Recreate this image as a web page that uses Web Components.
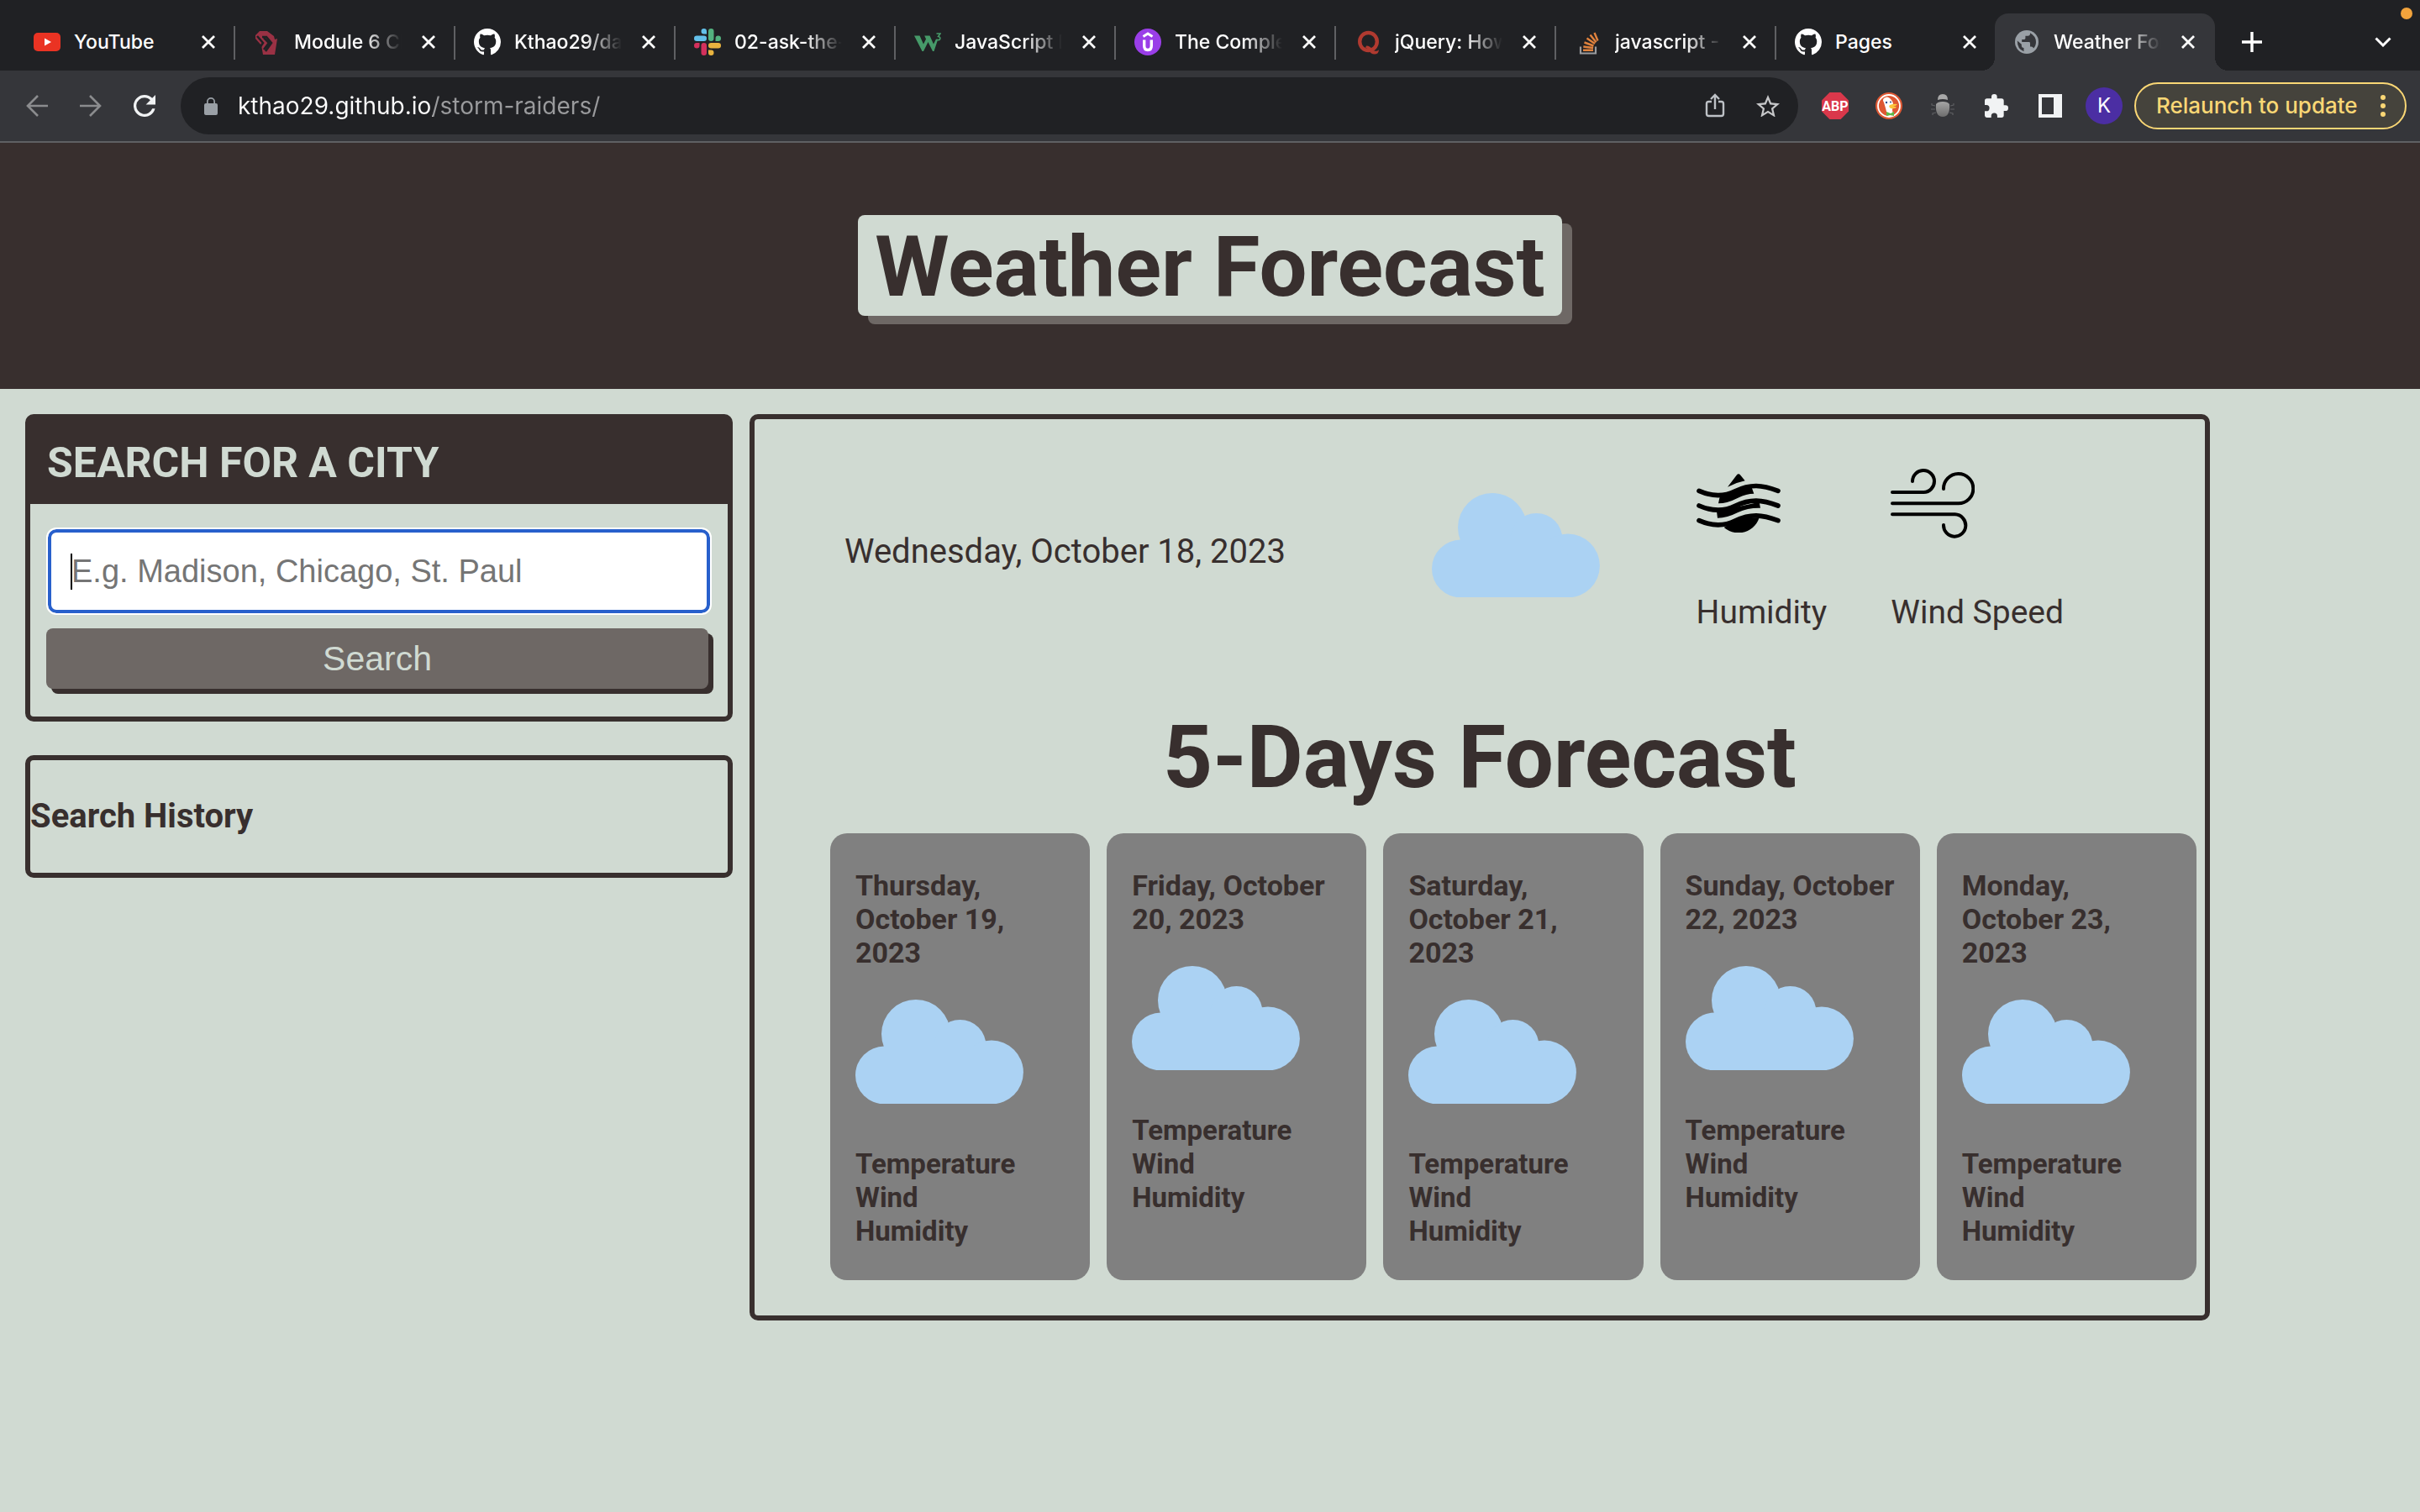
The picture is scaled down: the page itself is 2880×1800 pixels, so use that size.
<!DOCTYPE html>
<html lang="en">
<head>
<meta charset="utf-8">
<title>Weather Forecast</title>
<style>
  :root {
    --ink: #382f2e;
    --mist: #d0dad2;
    --stone: #6e6865;
  }
  html, body { margin: 0; min-height: 100%; }
  body { background: var(--mist); color: var(--ink); font-family: Roboto, sans-serif; }
</style>
</head>
<body>
<browser-window></browser-window>
<weather-page></weather-page>

<script>
const ICONS = {
  youtube: `<svg viewBox="0 0 32 32"><rect y="5" width="32" height="22" rx="5" fill="#ea3323"/><path d="M13 11.5v9l8-4.5z" fill="#fff"/></svg>`,
  module: `<svg viewBox="0 0 32 32"><path d="M7 3h9l8 6 1 4 3-1-3 19H11L9 20l-7-8V8z" fill="#9a3144"/><path d="M4 9l7 8-4 6M10 10h5l6 7-7 10M12 11l6 6-6 8" fill="none" stroke="#202124" stroke-width="2.6"/></svg>`,
  github: `<svg viewBox="0 0 16 16"><path fill="#fff" d="M8 0C3.58 0 0 3.58 0 8c0 3.54 2.29 6.53 5.47 7.59.4.07.55-.17.55-.38 0-.19-.01-.82-.01-1.49-2.01.37-2.53-.49-2.69-.94-.09-.23-.48-.94-.82-1.13-.28-.15-.68-.52-.01-.53.63-.01 1.08.58 1.23.82.72 1.21 1.87.87 2.33.66.07-.52.28-.87.51-1.07-1.78-.2-3.64-.89-3.64-3.95 0-.87.31-1.59.82-2.15-.08-.2-.36-1.02.08-2.12 0 0 .67-.21 2.2.82.64-.18 1.32-.27 2-.27s1.36.09 2 .27c1.53-1.04 2.2-.82 2.2-.82.44 1.1.16 1.92.08 2.12.51.56.82 1.27.82 2.15 0 3.07-1.87 3.75-3.65 3.95.29.25.54.73.54 1.48 0 1.07-.01 1.93-.01 2.2 0 .21.15.46.55.38A8.01 8.01 0 0 0 16 8c0-4.42-3.58-8-8-8z"/></svg>`,
  slack: `<svg viewBox="0 0 32 32"><g fill="#63c0ea"><rect y="8.500" width="15" height="6.500" rx="3.200"/><path d="M15 6.500h-3.200A3.250 3.250 0 1 1 15 3.200z"/></g><g fill="#53b27f"><rect x="17" width="6.500" height="15" rx="3.200"/><path d="M25.500 15v-3.200a3.250 3.250 0 1 1 3.300 3.200z"/></g><g fill="#e8b33f"><rect x="17" y="17" width="15" height="6.500" rx="3.200"/><path d="M17 25.500h3.200a3.250 3.250 0 1 1-3.200 3.300z"/></g><g fill="#d3305c"><rect x="8.500" y="17" width="6.500" height="15" rx="3.200"/><path d="M6.500 17v3.200A3.250 3.250 0 1 1 3.200 17z"/></g></svg>`,
  w3: `<svg viewBox="0 0 32 32"><path d="M0 8.500h6.500l4.500 10 3-6-1.800-4h6.300l4.500 10 3-6 2 1L23.500 27h-1.500l-5.500-11L11 27H9.500z" fill="#469a69"/><path d="M26.500 6h4.500l-2.500 3.500q3 .5 2.200 3-1.200 2-4.200.5" fill="none" stroke="#469a69" stroke-width="1.500"/></svg>`,
  udemy: `<svg viewBox="0 0 32 32"><circle cx="16" cy="16" r="16" fill="#9a3ee8"/><path d="M10.500 9.500l5.500-3.500 5.500 3.500" fill="none" stroke="#fff" stroke-width="3"/><path d="M11.700 13.500v7q0 5 4.300 5t4.300-5v-7" fill="none" stroke="#fff" stroke-width="3.400"/></svg>`,
  quora: `<svg viewBox="0 0 32 32"><ellipse cx="16.500" cy="15.500" rx="10.300" ry="10.500" fill="none" stroke="#b03a30" stroke-width="4.400"/><path d="M14 20.500q5 0 7 4.500 2.500 2.500 6 1.500 1.500-.5 2-1.500 0 5.500-5.500 5.500-4 0-6-4-2-3.500-4.500-3.500z" fill="#b03a30"/></svg>`,
  stack: `<svg viewBox="0 0 32 32"><path d="M7 21.500v8h18v-8" fill="none" stroke="#9a9c9f" stroke-width="2.200"/><g stroke="#e0823d" stroke-width="2.400"><path d="M10 25.800h12M10.300 21.500l11.800 1.500M11.500 16.500l11 4M14.500 11.500l9.500 6.500M18.500 7.500l7 8.800M23.500 5l4 9.500"/></g></svg>`,
  globe: `<svg viewBox="0 0 28 28"><circle cx="14" cy="14" r="14" fill="#9aa0a6"/><path d="M2.800 12.500l5 4.200v1.500q0 2.500 2.700 2.800v4.200q-7.800-2.700-7.700-12.700zM18 3.200v.8q0 2.700-2.800 2.800h-2.800v2.800q0 1.400-1.400 1.400H8.200V14h8.400q1.400 0 1.400 1.400v4.200h1.400q2 0 2.600 2 3-3 3-7.600 0-7-7-10.800z" fill="#35363a"/></svg>`,
  close: `<svg viewBox="0 0 16 16"><path d="M1 1l14 14M15 1L1 15" stroke="#fff" stroke-width="2.800"/></svg>`,
  plus: `<svg viewBox="0 0 24 24"><path d="M12 0v24M0 12h24" stroke="#fff" stroke-width="3.400"/></svg>`,
  chevron: `<svg viewBox="0 0 20 12"><path d="M1.500 1.500l8.500 8.500 8.500-8.500" fill="none" stroke="#fff" stroke-width="3"/></svg>`,
  back: `<svg viewBox="0 0 26 26"><path d="M26 13H2M14 1L2 13l12 12" fill="none" stroke="#8b8c8e" stroke-width="2.600"/></svg>`,
  forward: `<svg viewBox="0 0 26 26"><path d="M0 13h24M12 1l12 12-12 12" fill="none" stroke="#8b8c8e" stroke-width="2.600"/></svg>`,
  reload: `<svg viewBox="4 4 16 16"><path fill="#f1f3f4" d="M17.650 6.350A7.960 7.960 0 0 0 12 4a8 8 0 1 0 7.730 10h-2.080A6 6 0 1 1 12 6c1.660 0 3.140.69 4.220 1.780L13 11h7V4l-2.350 2.350z"/></svg>`,
  lock: `<svg viewBox="4 1 16 21"><path fill="#9aa0a6" d="M18 8h-1V6A5 5 0 0 0 7 6v2H6a2 2 0 0 0-2 2v10c0 1.100.9 2 2 2h12a2 2 0 0 0 2-2V10a2 2 0 0 0-2-2zM8.700 6a3.300 3.300 0 0 1 6.600 0v2H8.700z"/></svg>`,
  share: `<svg viewBox="0 0 24 30"><path d="M8 10H4.500Q2 10 2 12.500v12Q2 27 4.500 27h15q2.500 0 2.500-2.500v-12Q22 10 19.500 10H16M12 19V2.500M7 7l5-5 5 5" fill="none" stroke="#bdc1c6" stroke-width="2.400"/></svg>`,
  star: `<svg viewBox="2 2 20 19"><path fill="#c6c7c9" d="M22 9.240l-7.190-.62L12 2 9.190 8.630 2 9.240l5.460 4.730L5.820 21 12 17.270 18.180 21l-1.630-7.030L22 9.240zM12 15.400l-3.760 2.270 1-4.280-3.320-2.880 4.380-.38L12 6.100l1.710 4.040 4.380.38-3.320 2.880 1 4.280L12 15.400z"/></svg>`,
  abp: `<svg viewBox="0 0 32 32"><path d="M9.400 0h13.200L32 9.400v13.200L22.600 32H9.400L0 22.600V9.400z" fill="#da384b"/><text x="16" y="22" text-anchor="middle" font-family="Roboto, sans-serif" font-weight="700" font-size="16" fill="#fff">ABP</text></svg>`,
  duck: `<svg viewBox="0 0 32 32"><circle cx="16" cy="16" r="16" fill="#de5833"/><circle cx="16" cy="16" r="13" fill="none" stroke="#fff" stroke-width="1.800"/><path d="M10 7q4-3 7 0 4 3 4 8l-1 6 1 6q-5 2-7 0-2-9-4-15-2-3 0-5z" fill="#fff"/><path d="M17 15q5-2 9-1-1 2-5 3h4q-1 3-7 2-3-2-1-4z" fill="#fcc53d"/><path d="M13 23l5 2 4-2v5l-4-1-5 1z" fill="#5cb947"/><circle cx="13" cy="12" r="1.200" fill="#2d4f8e"/><circle cx="18" cy="11.500" r="1" fill="#2d4f8e"/></svg>`,
  bug: `<svg viewBox="0 0 28 28"><defs><linearGradient id="g" x2="0" y2="1"><stop stop-color="#a5a5a5"/><stop offset="1" stop-color="#6d6d6d"/></linearGradient></defs><path d="M8 7q0-7 6-7t6 7q-6-2-12 0z" fill="#a8a8a8"/><path d="M6 12q2-3 8-3t8 3q1 15-8 15T6 12z" fill="url(#g)"/><path d="M5 14l-4-1v-2M5 18H0M6 22l-4 1v2M23 14l4-1v-2M23 18h5M22 22l4 1v2" fill="none" stroke="#5e5f62" stroke-width="1.200"/></svg>`,
  puzzle: `<svg viewBox="2 1 21 21"><path fill="#f1f3f4" d="M20.500 11H19V7a2 2 0 0 0-2-2h-4V3.500a2.500 2.500 0 0 0-5 0V5H4a2 2 0 0 0-1.990 2v3.800H3.500a2.700 2.700 0 0 1 0 5.400H2V20c0 1.100.9 2 2 2h3.800v-1.500a2.700 2.700 0 0 1 5.400 0V22H17a2 2 0 0 0 2-2v-4h1.500a2.500 2.500 0 0 0 0-5z"/></svg>`,
  panel: `<svg viewBox="0 0 28 28"><path fill="#f1f3f4" fill-rule="evenodd" d="M0 0h28v28H0zM4 4v20h14V4z"/></svg>`,
  cloud: `<svg viewBox="0 0 200 124"><g fill="#abd2f3"><circle cx="72" cy="41" r="41"/><circle cx="124.500" cy="55" r="31"/><circle cx="162" cy="86.500" r="37.900"/><circle cx="34.400" cy="90" r="34.400"/><path d="M34 55.600h116l12 20v48.800H34z"/></g></svg>`,
  humidity: `<svg viewBox="57 71 300 211"><g fill="none" stroke="#000" stroke-width="17" stroke-linecap="round"><path d="M66 132C100 147 145 158 195 133C250 107 290 110 348 132"/><path d="M66 185C100 200 145 211 195 186C250 160 290 163 348 185"/><path d="M66 238C100 253 145 264 195 239C250 213 290 216 348 238"/></g><path d="M168 118L200 76Q207 68 214 76L230 96Q200 102 168 118ZM141 148L135 177Q166 177 205 157Q235 142 262 142L254 120ZM129 205L132 229Q166 229 205 209Q240 192 285 193L281 172ZM156 262Q210 225 281 228C270 262 240 282 207 282Q178 282 156 264Z"/></svg>`,
  wind: `<svg viewBox="750 50 300 252"><g fill="none" stroke="#000" stroke-width="12" stroke-linecap="round"><path d="M756 137H868A39 39 0 1 0 828 98"/><path d="M756 177H992A53 53 0 1 0 939 125"/><path d="M756 216H980A39.500 39.500 0 1 1 939 254"/></g></svg>`
};

class BaseElement extends HTMLElement {
  connectedCallback() {
    if (this.shadowRoot) return;
    this.attachShadow({ mode: 'open' }).innerHTML =
      `<style>*{box-sizing:border-box}svg{display:block}button{border:0;background:none;padding:0;margin:0;font:inherit;color:inherit}${this.css()}</style>${this.html()}`;
  }
}

customElements.define('ui-icon', class extends BaseElement {
  css() { return `:host{display:block;flex:none;width:32px}svg{width:100%;height:auto}`; }
  html() { return ICONS[this.getAttribute('name')]; }
});

customElements.define('browser-tab', class extends BaseElement {
  css() { return `
    :host{display:flex;align-items:center;flex:0 1 262px;min-width:0;height:68px;padding:0 24px 0 22px;color:#fff;font:500 23px/32px Inter,sans-serif;position:relative}
    :host(:not([active]):not([last]))::after{content:"";position:absolute;right:0;top:15px;width:2px;height:40px;background:#5f6063}
    :host([active]){margin-left:-2px;background:#35363a;border-radius:16px 16px 0 0}
    :host([active])::before,:host([active])::after{content:"";position:absolute;bottom:0;width:16px;height:16px}
    :host([active])::before{left:-16px;background:radial-gradient(circle at 0 0,#202124 16px,#35363a 16px)}
    :host([active])::after{right:-16px;background:radial-gradient(circle at 100% 0,#202124 16px,#35363a 16px)}
    .slot{width:32px;flex:none;display:flex;justify-content:center}
    .slot.small ui-icon{width:28px}
    .title{flex:1;min-width:0;margin:0 24px 0 16px;overflow:hidden;white-space:nowrap;-webkit-mask-image:linear-gradient(90deg,#000 65%,transparent 100%);mask-image:linear-gradient(90deg,#000 65%,transparent 100%)}
    :host([short]) .title{-webkit-mask-image:none;mask-image:none}
    .close{flex:none}.close ui-icon{width:16px}`; }
  html() {
    const icon = this.getAttribute('icon');
    return `<span class="slot ${icon === 'globe' ? 'small' : ''}"><ui-icon name="${icon}"></ui-icon></span>
      <span class="title"><slot></slot></span>
      <button class="close" aria-label="Close tab"><ui-icon name="close"></ui-icon></button>`;
  }
});

customElements.define('tab-strip', class extends BaseElement {
  css() { return `
    :host{display:flex;align-items:flex-end;height:84px;padding:0 34px 0 18px;background:#202124;position:relative}
    .new{margin:0 0 22px 32px}.new ui-icon{width:24px}
    .list{margin:0 0 28px auto}.list ui-icon{width:20px}
    .dot{position:absolute;right:9px;top:9px;width:14px;height:14px;border-radius:50%;background:#f2a33c}`; }
  html() { return `
    <browser-tab icon="youtube" short>YouTube</browser-tab>
    <browser-tab icon="module">Module 6 Challenge</browser-tab>
    <browser-tab icon="github">Kthao29/day-planner</browser-tab>
    <browser-tab icon="slack">02-ask-the-class</browser-tab>
    <browser-tab icon="w3">JavaScript Dates</browser-tab>
    <browser-tab icon="udemy">The Complete Course</browser-tab>
    <browser-tab icon="quora">jQuery: How to</browser-tab>
    <browser-tab icon="stack">javascript - How</browser-tab>
    <browser-tab icon="github" short last>Pages</browser-tab>
    <browser-tab icon="globe" active>Weather Forecast</browser-tab>
    <button class="new" aria-label="New tab"><ui-icon name="plus"></ui-icon></button>
    <button class="list" aria-label="Search tabs"><ui-icon name="chevron"></ui-icon></button>
    <span class="dot"></span>`; }
});

customElements.define('tool-bar', class extends BaseElement {
  css() { return `
    :host{display:flex;align-items:center;height:86px;padding:0 16px 0 31px;background:#35363a;border-bottom:2px solid #5f6063;font:400 28px/32px Inter,sans-serif}
    .nav{display:flex;gap:38px}.nav ui-icon{width:26px}
    .address{flex:1;display:flex;align-items:center;height:68px;margin:0 28px 0 30px;padding:0 22px 0 28px;border-radius:34px;background:#202124}
    .address .lock{width:16px}
    input{flex:1;min-width:0;margin:0 0 0 24px;padding:0;border:0;outline:0;background:linear-gradient(90deg,#fff 232px,#9a9b9d 232px);-webkit-background-clip:text;background-clip:text;-webkit-text-fill-color:transparent;font:inherit;height:40px}
    .share{width:24px;margin-right:37px}.star{width:28px}
    .ext{display:flex;align-items:center;gap:32px}
    .bug,.puzzle,.panel{width:28px;margin:0 2px}
    .avatar{width:44px;height:44px;margin:0 14px 0 26px;border-radius:50%;background:#4b2ea3;color:#fff;font:400 24px/44px Inter,sans-serif}
    .relaunch{display:flex;align-items:center;justify-content:space-between;width:324px;height:56px;padding:0 23px 0 24px;border:2px solid #fad775;border-radius:28px;background:#45433c;color:#fad775;font:500 26px/32px Inter,sans-serif;white-space:nowrap}
    .dots{display:grid;gap:4px}.dots i{width:6px;height:6px;border-radius:50%;background:#fad775}`; }
  html() { return `
    <div class="nav">
      <button aria-label="Back"><ui-icon name="back"></ui-icon></button>
      <button aria-label="Forward"><ui-icon name="forward"></ui-icon></button>
      <button aria-label="Reload"><ui-icon name="reload"></ui-icon></button>
    </div>
    <div class="address">
      <ui-icon class="lock" name="lock"></ui-icon>
      <input type="text" aria-label="Address" value="kthao29.github.io/storm-raiders/">
      <button aria-label="Share"><ui-icon class="share" name="share"></ui-icon></button>
      <button aria-label="Bookmark"><ui-icon class="star" name="star"></ui-icon></button>
    </div>
    <div class="ext">
      <ui-icon name="abp"></ui-icon><ui-icon name="duck"></ui-icon>
      <ui-icon class="bug" name="bug"></ui-icon><ui-icon class="puzzle" name="puzzle"></ui-icon>
      <ui-icon class="panel" name="panel"></ui-icon>
    </div>
    <button class="avatar">K</button>
    <button class="relaunch">Relaunch to update<span class="dots"><i></i><i></i><i></i></span></button>`; }
});

customElements.define('browser-window', class extends BaseElement {
  css() { return `:host{display:block}`; }
  html() { return `<tab-strip></tab-strip><tool-bar></tool-bar>`; }
});

customElements.define('page-header', class extends BaseElement {
  css() { return `
    :host{display:flex;justify-content:center;padding:86px 0 87px;background:var(--ink)}
    h1{margin:0;padding:4px 20px 0;border-radius:8px;background:var(--mist);box-shadow:12px 10px 0 var(--stone);font-size:101px;line-height:116px;font-weight:700}`; }
  html() { return `<h1><slot></slot></h1>`; }
});

customElements.define('search-card', class extends BaseElement {
  css() { return `
    :host{display:block;border:6px solid var(--ink);border-radius:10px}
    h2{margin:0;padding:3px 20px 0;background:var(--ink);color:var(--mist);font-size:50px;line-height:98px;font-weight:700;text-transform:uppercase}
    form{display:grid;gap:18px;padding:30px 23px 33px 19px}
    .field{position:relative;display:grid;margin:0 -2px 0 2px}
    input{height:100px;padding:0 24px;border:4px solid #2860cc;border-radius:10px;outline:2px solid #fff;background:#fff;font:38px/44px "Liberation Sans",sans-serif;color:#000}
    input::placeholder{color:#757575;opacity:1}
    .caret{position:absolute;left:27px;top:29px;width:2px;height:43px;background:#000}
    .go{height:72px;border-radius:8px;background:var(--stone);color:var(--mist);box-shadow:6px 6px 0 var(--ink);font:41px/72px "Liberation Sans",sans-serif}`; }
  html() { return `
    <h2><slot></slot></h2>
    <form>
      <div class="field"><input type="text" aria-label="Search for a city" placeholder="E.g. Madison, Chicago, St. Paul"><span class="caret"></span></div>
      <button class="go" type="button">Search</button>
    </form>`; }
});

customElements.define('history-card', class extends BaseElement {
  css() { return `
    :host{display:block;margin-top:40px;border:6px solid var(--ink);border-radius:10px}
    h3{margin:0;font-size:40px;line-height:134px;font-weight:700}`; }
  html() { return `<h3><slot></slot></h3>`; }
});

customElements.define('today-summary', class extends BaseElement {
  css() { return `
    :host{display:flex;align-items:flex-start;padding:58px 168px 0 107px;font-size:40px;line-height:50px}
    .date{margin:75px auto 0 0}
    .cloud{width:200px;margin:30px 115px 0 0}
    .stats{display:flex;gap:76px;height:197px;font-size:39px}
    .stats div{display:flex;flex-direction:column;justify-content:space-between}
    .stats ui-icon{width:100px;height:84px;display:flex;align-items:center}`; }
  html() { return `
    <time class="date" datetime="2023-10-18">Wednesday, October 18, 2023</time>
    <ui-icon class="cloud" name="cloud"></ui-icon>
    <div class="stats">
      <div><ui-icon name="humidity"></ui-icon><span>Humidity</span></div>
      <div><ui-icon name="wind"></ui-icon><span>Wind Speed</span></div>
    </div>`; }
});

customElements.define('forecast-day', class extends BaseElement {
  css() { return `
    :host{display:block;padding:42px 28px 38px 30px;border-radius:20px;background:#808080;font-size:33px;line-height:40px;font-weight:700}
    p{margin:0}
    .date{font-size:34px}
    ui-icon{width:200px;margin:36px 0 52px}`; }
  html() { return `<p class="date"><slot></slot></p><ui-icon name="cloud"></ui-icon><p>Temperature</p><p>Wind</p><p>Humidity</p>`; }
});

customElements.define('forecast-panel', class extends BaseElement {
  css() { return `
    :host{display:block;border:6px solid var(--ink);border-radius:10px}
    h2{margin:88px 0 30px;text-align:center;font-size:103px;line-height:120px;font-weight:700}
    .days{display:grid;grid-template-columns:repeat(5,1fr);gap:20px;padding:0 10px 42px 90px}`; }
  html() { return `
    <today-summary></today-summary>
    <h2>5-Days Forecast</h2>
    <div class="days">
      <forecast-day>Thursday, October 19, 2023</forecast-day>
      <forecast-day>Friday, October 20, 2023</forecast-day>
      <forecast-day>Saturday, October 21, 2023</forecast-day>
      <forecast-day>Sunday, October 22, 2023</forecast-day>
      <forecast-day>Monday, October 23, 2023</forecast-day>
    </div>`; }
});

customElements.define('weather-page', class extends BaseElement {
  css() { return `
    :host{display:block}
    main{display:grid;grid-template-columns:842fr 1738fr 230fr;gap:20px;align-items:start;padding:30px 0 0 30px}`; }
  html() { return `
    <page-header>Weather Forecast</page-header>
    <main>
      <aside><search-card>Search for a city</search-card><history-card>Search History</history-card></aside>
      <forecast-panel></forecast-panel>
    </main>`; }
});
</script>
</body>
</html>
